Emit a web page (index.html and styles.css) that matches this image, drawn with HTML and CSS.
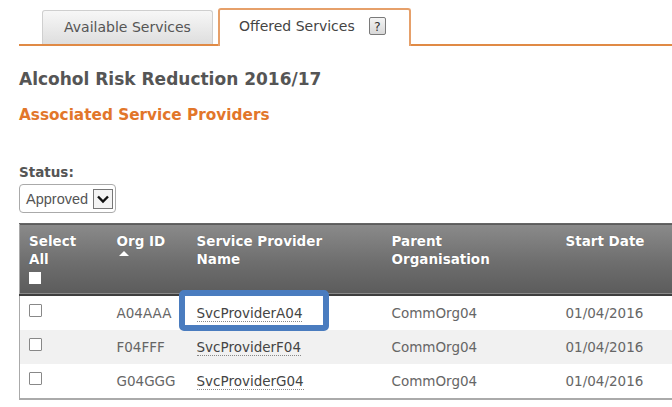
FILE: index.html
```html
<!DOCTYPE html>
<html>
<head>
<meta charset="utf-8">
<link rel="stylesheet" href="styles.css">
</head>
<body>
<div class="page">
  <div class="tabs">
    <div class="tab">Available Services</div>
    <div class="tab active">Offered Services <span class="help">?</span></div>
  </div>
  <h1 class="title">Alcohol Risk Reduction 2016/17</h1>
  <h2 class="subtitle">Associated Service Providers</h2>
  <div class="status-label">Status:</div>
  <div class="select">
    <span class="select-text">Approved</span>
    <span class="select-btn"><svg width="14" height="10" viewBox="0 0 14 10"><path d="M2 2.5 L7 7.5 L12 2.5" fill="none" stroke="#111" stroke-width="2.4"/></svg></span>
  </div>
  <table class="grid">
    <colgroup>
      <col class="c1"><col class="c2"><col class="c3"><col class="c4"><col class="c5">
    </colgroup>
    <thead>
      <tr>
        <th>Select<br>All<br><span class="hcheck"></span></th>
        <th>Org ID<span class="sort"></span></th>
        <th>Service Provider<br>Name</th>
        <th>Parent<br>Organisation</th>
        <th>Start Date</th>
      </tr>
    </thead>
    <tbody>
      <tr>
        <td><span class="cb"></span></td>
        <td>A04AAA</td>
        <td><span class="hl"><span class="link">SvcProviderA04</span></span></td>
        <td>CommOrg04</td>
        <td>01/04/2016</td>
      </tr>
      <tr class="alt">
        <td><span class="cb"></span></td>
        <td>F04FFF</td>
        <td><span class="link">SvcProviderF04</span></td>
        <td>CommOrg04</td>
        <td>01/04/2016</td>
      </tr>
      <tr>
        <td><span class="cb"></span></td>
        <td>G04GGG</td>
        <td><span class="link">SvcProviderG04</span></td>
        <td>CommOrg04</td>
        <td>01/04/2016</td>
      </tr>
    </tbody>
  </table>
</div>
</body>
</html>
```
FILE: styles.css
```css
html, body {
  margin: 0;
  padding: 0;
  background: #fff;
  overflow: hidden;
}
body {
  width: 672px;
  height: 407px;
  font-family: "DejaVu Sans", Verdana, sans-serif;
  color: #555;
}
.page {
  padding-left: 19px;
}
.tabs {
  display: flex;
  align-items: flex-end;
  padding-left: 23px;
  padding-top: 9px;
  border-bottom: 2px solid #e08a45;
  height: 35px;
}
.tab {
  box-sizing: border-box;
  width: 171px;
  height: 34px;
  border: 1px solid #cfcfcf;
  border-bottom: none;
  border-radius: 3px 3px 0 0;
  background: linear-gradient(#f7f7f7, #dedede);
  font-size: 14px;
  color: #555;
  display: flex;
  align-items: center;
  justify-content: center;
  padding-bottom: 2px;
}
.tab.active {
  width: 193px;
  height: 38px;
  margin-left: 5px;
  margin-bottom: -2px;
  background: #fff;
  border: 2px solid #e6a06a;
  border-bottom: none;
  color: #444;
  justify-content: flex-start;
  padding-left: 19px;
  padding-bottom: 4px;
}
.help {
  display: inline-flex;
  align-items: center;
  justify-content: center;
  box-sizing: border-box;
  width: 17px;
  height: 18px;
  margin-left: 14px;
  border: 1px solid #7a7a7a;
  border-radius: 2px;
  background: linear-gradient(#f4f4f4, #d8d8d8);
  font-size: 12.5px;
  color: #333;
}
.title {
  margin: 23px 0 0 0;
  font-size: 17px;
  line-height: 20px;
  font-weight: bold;
  color: #555;
}
.subtitle {
  margin: 16px 0 0 0;
  font-size: 15.3px;
  line-height: 20px;
  font-weight: bold;
  color: #e2762a;
}
.status-label {
  margin-top: 38px;
  font-size: 13.5px;
  line-height: 18px;
  font-weight: bold;
  color: #555;
}
.select {
  box-sizing: border-box;
  width: 97px;
  height: 29px;
  margin-top: 3px;
  border: 1px solid #aaa;
  border-radius: 4px;
  display: flex;
  align-items: center;
  padding-left: 6px;
  background: #fff;
}
.select-text {
  font-family: "Liberation Sans", Arial, sans-serif;
  font-size: 14.5px;
  color: #555;
}
.select-btn {
  box-sizing: border-box;
  width: 20px;
  height: 20px;
  margin-left: 5px;
  border: 1px solid #777;
  background: #f4f4f4;
  display: flex;
  align-items: center;
  justify-content: center;
}
.grid {
  margin-top: 10px;
  border-collapse: collapse;
  width: 653px;
  table-layout: fixed;
  border-left: 1px solid #aaa;
  border-right: 1px solid #aaa;
  border-bottom: 2px solid #aaa;
}
.c1 { width: 88px; }
.c2 { width: 80px; }
.c3 { width: 195px; }
.c4 { width: 174px; }
.c5 { width: 116px; }
.grid thead tr {
  background: linear-gradient(#8a8a8a, #6e6e6e 55%, #5c5c5c);
  border-top: 1px solid #666;
  border-bottom: 2px solid #3e3e3e;
}
.grid th {
  height: 71px;
  box-sizing: border-box;
  padding: 8px 0 0 9px;
  vertical-align: top;
  text-align: left;
  font-size: 13.5px;
  line-height: 18px;
  font-weight: bold;
  color: #fff;
  text-shadow: 0 0 1px rgba(0,0,0,0.3);
}
.hcheck {
  display: inline-block;
  width: 12px;
  height: 12px;
  background: #fff;
  margin-top: 4px;
  vertical-align: top;
}
.sort {
  display: block;
  width: 0;
  height: 0;
  margin: 1px 0 0 2px;
  border-left: 5px solid transparent;
  border-right: 5px solid transparent;
  border-bottom: 5px solid #fff;
}
.grid td {
  height: 34px;
  padding: 0 0 0 9px;
  font-size: 13.5px;
  color: #666;
  vertical-align: middle;
  white-space: nowrap;
}
.grid tr.alt td {
  background: #f1f1f1;
}
.cb {
  display: inline-block;
  box-sizing: border-box;
  width: 13px;
  height: 13px;
  border: 1px solid #888;
  border-radius: 1px;
  background: #fff;
  vertical-align: middle;
  margin-top: -6px;
}
.link {
  color: #444;
  border-bottom: 1px dotted #888;
}
.hl {
  position: relative;
  z-index: 0;
  display: inline-block;
}
.hl::before {
  content: "";
  position: absolute;
  z-index: -1;
  left: -18px;
  top: -15px;
  width: 150px;
  height: 41px;
  box-sizing: border-box;
  border: 6px solid #4a7cbf;
  border-radius: 5px;
  background: #fff;
}
```
